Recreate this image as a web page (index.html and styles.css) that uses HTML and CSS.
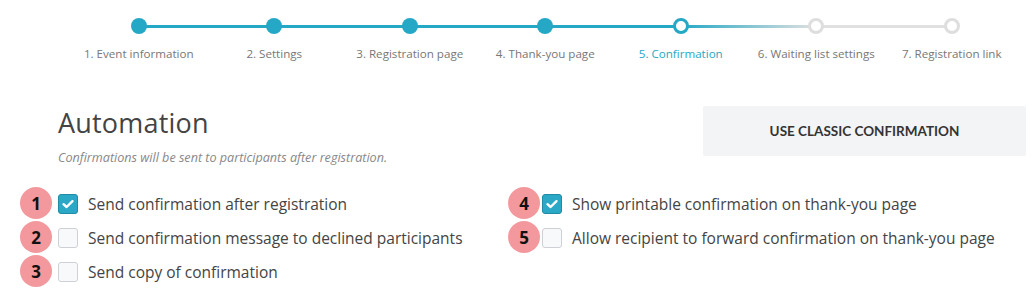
FILE: index.html
```html
<!DOCTYPE html>
<html>
<head>
<meta charset="utf-8">
<link rel="stylesheet" href="styles.css">
</head>
<body>
<div class="stepper">
  <div class="step done"><span class="dot"></span><span class="label">1. Event information</span></div>
  <div class="step done"><span class="dot"></span><span class="label">2. Settings</span></div>
  <div class="step done"><span class="dot"></span><span class="label">3. Registration page</span></div>
  <div class="step done"><span class="dot"></span><span class="label">4. Thank-you page</span></div>
  <div class="step current"><span class="dot"></span><span class="label">5. Confirmation</span></div>
  <div class="step todo"><span class="dot"></span><span class="label">6. Waiting list settings</span></div>
  <div class="step todo last"><span class="dot"></span><span class="label">7. Registration link</span></div>
</div>

<div class="header">
  <div class="titles">
    <h1 class="title">Automation</h1>
    <p class="subtitle">Confirmations will be sent to participants after registration.</p>
  </div>
  <button class="classic">USE CLASSIC CONFIRMATION</button>
</div>

<div class="options">
  <div class="col">
    <label class="opt"><span class="badge">1</span><span class="box checked"><svg viewBox="0 0 20 20" width="20" height="20"><path d="M5.5 10.2 L8.6 13 L14.5 7.2" fill="none" stroke="#fff" stroke-width="2.4" stroke-linecap="round" stroke-linejoin="round"/></svg></span><span class="text">Send confirmation after registration</span></label>
    <label class="opt"><span class="badge">2</span><span class="box"></span><span class="text">Send confirmation message to declined participants</span></label>
    <label class="opt"><span class="badge">3</span><span class="box"></span><span class="text">Send copy of confirmation</span></label>
  </div>
  <div class="col">
    <label class="opt"><span class="badge">4</span><span class="box checked"><svg viewBox="0 0 20 20" width="20" height="20"><path d="M5.5 10.2 L8.6 13 L14.5 7.2" fill="none" stroke="#fff" stroke-width="2.4" stroke-linecap="round" stroke-linejoin="round"/></svg></span><span class="text">Show printable confirmation on thank-you page</span></label>
    <label class="opt"><span class="badge">5</span><span class="box"></span><span class="text">Allow recipient to forward confirmation on thank-you page</span></label>
  </div>
</div>
</body>
</html>
```

FILE: styles.css
```css
* { box-sizing: border-box; }
html, body { margin: 0; padding: 0; background: #fff; }
body {
  font-family: "Open Sans", "Noto Sans", sans-serif;
  color: #444;
  width: 1035px;
  height: 306px;
  overflow: hidden;
}

.stepper {
  display: grid;
  grid-template-columns: repeat(7, 135.5px);
  padding-left: 71px;
  padding-top: 18px;
}
.step {
  position: relative;
  display: flex;
  flex-direction: column;
  align-items: center;
}
.step::after {
  content: "";
  position: absolute;
  top: 6.5px;
  left: 50%;
  width: 100%;
  height: 3px;
  background: #25a8c5;
  z-index: 0;
}
.step.current::after { background: linear-gradient(to right, #25a8c5, #e0e0e0); }
.step.todo::after { background: #e0e0e0; }
.step.last::after { display: none; }
.dot {
  position: relative;
  z-index: 1;
  width: 16px;
  height: 16px;
  border-radius: 50%;
  background: #25a8c5;
}
.current .dot { background: #fff; border: 3px solid #25a8c5; }
.todo .dot { background: #fff; border: 3px solid #dedede; }
.label {
  margin-top: 12px;
  font-size: 11.6px;
  color: #777;
  white-space: nowrap;
}
.current .label { color: #25a8c5; }

.header {
  display: flex;
  justify-content: space-between;
  align-items: flex-start;
  padding: 40px 9px 0 58px;
}
.title {
  margin: 6px 0 0 0;
  font-weight: 400;
  font-size: 27px;
  line-height: 32px;
  color: #444;
  letter-spacing: 0.2px;
}
.subtitle {
  margin: 10px 0 0 0;
  font-style: italic;
  font-size: 12.6px;
  color: #888;
}
.classic {
  margin-top: 5px;
  width: 323px;
  height: 50px;
  border: none;
  border-radius: 2px;
  background: #f3f4f6;
  font-family: "Lato", "Open Sans", sans-serif;
  font-weight: 700;
  font-size: 13.5px;
  color: #333;
}

.options {
  display: grid;
  grid-template-columns: 484px 1fr;
  padding: 21px 0 0 58px;
}
.col { display: flex; flex-direction: column; }
.opt {
  position: relative;
  display: flex;
  align-items: center;
  height: 34px;
}
.badge {
  position: absolute;
  left: -38px;
  top: 0px;
  width: 32px;
  height: 32px;
  border-radius: 50%;
  background: #f3999e;
  color: #111;
  font-weight: 700;
  font-size: 17px;
  display: flex;
  align-items: center;
  justify-content: center;
}
.col + .col .badge { left: -34px; }
.box {
  width: 20px;
  height: 20px;
  border: 1px solid #cdd0d4;
  border-radius: 3px;
  background: #f8f9fb;
  display: flex;
  align-items: center;
  justify-content: center;
  flex: none;
}
.box.checked { background: #2aa8c6; border-color: #1f8ba5; }
.box svg { display: block; margin: -1px; }
.text {
  margin-left: 10px;
  font-size: 15.5px;
  color: #444;
}
```
